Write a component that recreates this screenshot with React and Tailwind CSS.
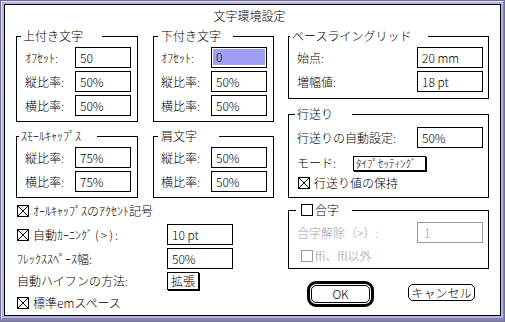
import React from "react";

function Check({ checked = false, grey = false }) {
  const c = grey ? "#9a9a9a" : "#000000";
  return (
    <svg width="12" height="12" viewBox="0 0 12 12" className="shrink-0" shapeRendering="crispEdges">
      <rect x="0.5" y="0.5" width="11" height="11" fill="#ffffff" stroke={c} />
      {checked && <path d="M1 1L11 11M11 1L1 11" stroke={c} fill="none" />}
    </svg>
  );
}

function Field({ children, className = "", grey = false }) {
  return (
    <div
      className={
        "h-[21px] border flex items-center shrink-0 pl-[4px] " +
        (grey ? "border-[#9a9a9a] text-[#9a9a9a] " : "border-black ") +
        className
      }
    >
      {children}
    </div>
  );
}

function Group({ legend, legendClass = "", className = "", children }) {
  return (
    <fieldset className={"border border-black min-w-0 " + className}>
      <legend className={"h-[14px] leading-[14px] whitespace-nowrap " + legendClass}>{legend}</legend>
      {children}
    </fieldset>
  );
}

function Row({ label, children, className = "" }) {
  return (
    <div className={"flex items-center justify-between " + className}>
      <span>{label}</span>
      {children}
    </div>
  );
}

export default function App() {
  return (
    <div className="w-[505px] h-[322px] border border-[#6e6e96] bg-[#b4b4e0] font-['Noto_Sans_CJK_JP','Noto_Sans',sans-serif] font-light text-[12px] leading-[14px] text-black">
      <div className="h-full border-t border-l border-t-[#e2e2fc] border-l-[#e2e2fc] border-r border-b-[3px] border-r-[#8484b4] border-b-[#8484b4] p-[2px]">
        <div className="h-full border border-black bg-white">
          <div className="mt-[4px] h-[14px] text-center pr-[6px]">文字環境設定</div>

          <div className="flex mt-[6px] pl-[11px]">
            <div className="w-[122px] flex flex-col gap-[7px]">
              <Group legend="上付き文字" legendClass="ml-[4px] pl-[2px] w-[81px]">
                <div className="pt-[4px] pb-[5px] pl-[8px] pr-[6px] flex flex-col gap-[3px]">
                  <Row label="ｵﾌｾｯﾄ:"><Field className="w-[56px]">50</Field></Row>
                  <Row label="縦比率:"><Field className="w-[56px]">50%</Field></Row>
                  <Row label="横比率:"><Field className="w-[56px]">50%</Field></Row>
                </div>
              </Group>
              <Group legend="ｽﾓｰﾙｷｬｯﾌﾟｽ" legendClass="ml-[2px] pl-[2px] w-[78px]">
                <div className="pt-[4px] pb-[5px] pl-[8px] pr-[6px] flex flex-col gap-[3px]">
                  <Row label="縦比率:"><Field className="w-[56px]">75%</Field></Row>
                  <Row label="横比率:"><Field className="w-[56px]">75%</Field></Row>
                </div>
              </Group>
            </div>

            <div className="w-[121px] ml-[15px] flex flex-col gap-[7px]">
              <Group legend="下付き文字" legendClass="ml-[4px] pl-[3px] w-[75px]">
                <div className="pt-[4px] pb-[5px] pl-[7px] pr-[6px] flex flex-col gap-[3px]">
                  <Row label="ｵﾌｾｯﾄ:">
                    <div className="w-[56px] h-[21px] border border-black pt-[1px] pl-[1px] pr-[1px] pb-[2px] shrink-0">
                      <div className="h-full bg-[#9f9ff5] flex items-center pl-[3px]">0</div>
                    </div>
                  </Row>
                  <Row label="縦比率:"><Field className="w-[56px]">50%</Field></Row>
                  <Row label="横比率:"><Field className="w-[56px]">50%</Field></Row>
                </div>
              </Group>
              <Group legend="肩文字" legendClass="ml-[4px] pl-[3px] w-[61px]">
                <div className="pt-[4px] pb-[5px] pl-[7px] pr-[6px] flex flex-col gap-[3px]">
                  <Row label="縦比率:"><Field className="w-[56px]">50%</Field></Row>
                  <Row label="横比率:"><Field className="w-[56px]">50%</Field></Row>
                </div>
              </Group>
            </div>

            <div className="w-[201px] ml-[14px] flex flex-col gap-[8px]">
              <Group legend="ベースライングリッド" legendClass="ml-[1px] pl-[2px] w-[138px]">
                <div className="pt-[4px] pb-[6px] pl-[8px] pr-[5px] flex flex-col gap-[3px]">
                  <Row label="始点:"><Field className="w-[66px]">20 mm</Field></Row>
                  <Row label="増幅値:"><Field className="w-[66px]">18 pt</Field></Row>
                </div>
              </Group>
              <Group legend="行送り" legendClass="ml-[6px] pl-[2px] w-[57px]">
                <div className="pt-[6px] pb-[7px] pl-[8px] pr-[5px] flex flex-col">
                  <Row label="行送りの自動設定:"><Field className="w-[66px]">50%</Field></Row>
                  <div className="mt-[7px] h-[16px] flex items-center">
                    <span className="w-[56px]">モード:</span>
                    <div className="h-[15px] w-[73px] border border-black shadow-[1px_1px_0_#000] flex items-center pl-[2px] text-[11px] leading-[13px] whitespace-nowrap">
                      ﾀｲﾌﾟｾｯﾃｨﾝｸﾞ
                    </div>
                  </div>
                  <div className="mt-[5px] h-[14px] flex items-center gap-[4px] pl-[1px]">
                    <Check checked />
                    <span>行送り値の保持</span>
                  </div>
                </div>
              </Group>
            </div>
          </div>

          <div className="flex">
            <div className="w-[283px] pl-[12px] pt-[6px] flex flex-col">
              <div className="h-[14px] flex items-center gap-[4px]">
                <Check checked />
                <span>ｵｰﾙｷｬｯﾌﾟｽのｱｸｾﾝﾄ記号</span>
              </div>
              <div className="mt-[6px] flex items-center">
                <div className="w-[150px] flex items-center gap-[4px]">
                  <Check checked />
                  <span>
                    自動ｶｰﾆﾝｸﾞ<span className="tracking-[2px] pl-[2px]">(&gt;)</span>:
                  </span>
                </div>
                <Field className="w-[66px]">10 pt</Field>
              </div>
              <div className="mt-[3px] flex items-center">
                <div className="w-[150px]">ﾌﾚｯｸｽｽﾍﾟｰｽ幅:</div>
                <Field className="w-[66px]">50%</Field>
              </div>
              <div className="mt-[3px] flex items-center">
                <div className="w-[150px]">自動ハイフンの方法:</div>
                <div className="h-[18px] w-[32px] border border-black shadow-[1px_1px_0_#000] flex items-center justify-center">拡張</div>
              </div>
              <div className="mt-[6px] h-[14px] flex items-center gap-[4px]">
                <Check checked />
                <span>標準emスペース</span>
              </div>
            </div>

            <div className="w-[201px] mt-[5px]">
              <Group
                legend={
                  <span className="flex items-center gap-[2px]">
                    <Check />
                    <span>合字</span>
                  </span>
                }
                legendClass="ml-[7px] pl-[5px] w-[56px]"
              >
                <div className="pt-[5px] pb-[5px] pl-[8px] pr-[5px] flex flex-col">
                  <Row label={<span className="text-[#9a9a9a]">合字解除（&gt;）:</span>}>
                    <Field grey className="w-[66px] pl-[6px]">1</Field>
                  </Row>
                  <div className="mt-[6px] h-[14px] flex items-center gap-[2px] pl-[4px] text-[#9a9a9a] [font-variant-ligatures:none]">
                    <Check grey />
                    <span>ffi、ffl以外</span>
                  </div>
                </div>
              </Group>
              <div className="flex items-start mt-[12px]">
                <div className="ml-[19px] w-[67px] h-[26px] border-[3px] border-black rounded-[9px] p-[1px]">
                  <div className="h-full border border-black rounded-[5px] flex items-center justify-center">OK</div>
                </div>
                <div className="ml-[34px] mt-[3px] w-[67px] h-[17px] border border-black rounded-[5px] flex items-center justify-center whitespace-nowrap">
                  キャンセル
                </div>
              </div>
            </div>
          </div>
        </div>
      </div>
    </div>
  );
}
